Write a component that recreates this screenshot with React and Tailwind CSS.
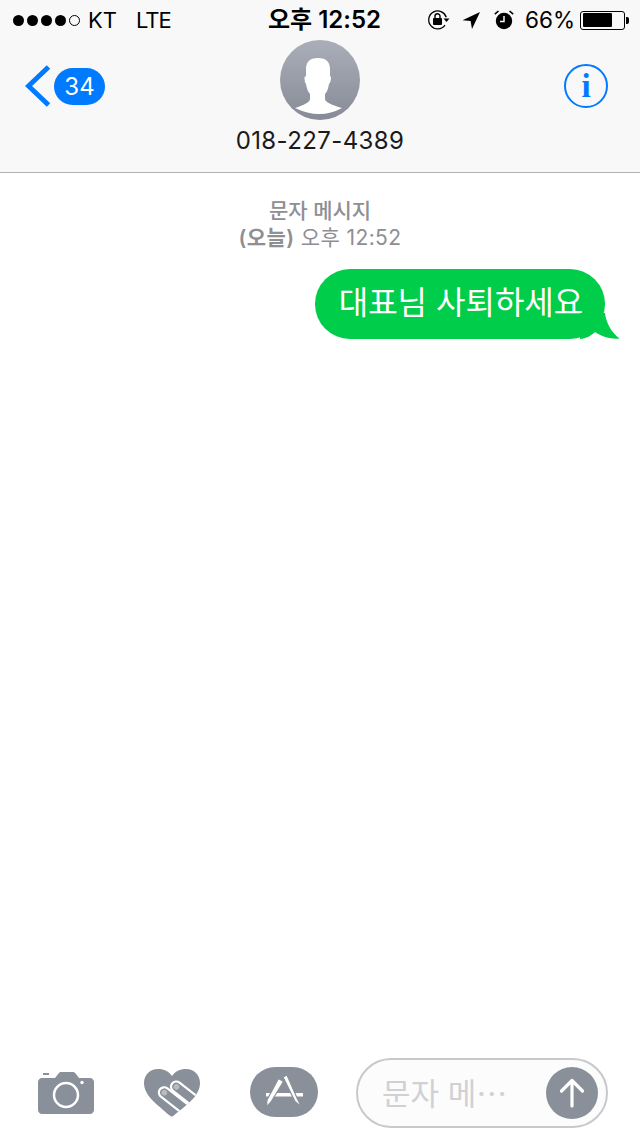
const FONT = "font-['Inter','Noto_Sans_CJK_KR',sans-serif]";

function Rotation() {
  return (
    <svg width="24" height="22" viewBox="0 0 24 22" className="block">
      <path d="M19.3 8.2A9 9 0 1 0 18 16.2" fill="none" stroke="#000" strokeWidth="1.3" />
      <path d="M16.5 9.5h6l-3 3.6z" fill="#000" />
      <rect x="6" y="9" width="9" height="7" rx="1" fill="#000" />
      <path d="M8 9V7.2a2.5 2.5 0 0 1 5 0V9" fill="none" stroke="#000" strokeWidth="1.4" />
    </svg>
  );
}

function Arrow() {
  return (
    <svg width="18" height="18" viewBox="0 0 18 18" className="block">
      <path d="M18 1 0.5 9.3 8.6 10 10 18z" fill="#000" />
    </svg>
  );
}

function Alarm() {
  return (
    <svg width="20" height="20" viewBox="0 0 20 20" className="block">
      <circle cx="10" cy="11" r="8.2" fill="#000" />
      <path d="M10 6v5.5H6" fill="none" stroke="#f8f8f8" strokeWidth="1.5" />
      <path d="M0.8 4.2 4.5 1M19.2 4.2 15.5 1" stroke="#000" strokeWidth="1.6" fill="none" />
    </svg>
  );
}

function Battery() {
  return (
    <div className="flex items-center">
      <div className="w-[45px] h-[19px] border border-black rounded-[3px] p-[1.5px] flex">
        <div className="w-[29px] h-full bg-black rounded-[1px]" />
      </div>
      <div className="w-[3px] h-[7px] bg-black rounded-r-[2px] ml-[1px]" />
    </div>
  );
}

function StatusBar() {
  return (
    <div className="h-10 relative flex items-center justify-between pl-[13px] pr-[11px] text-black">
      <div className="flex items-center">
        <div className="flex gap-[3px]">
          {[0, 1, 2, 3].map((i) => (
            <div key={i} className="w-[11px] h-[11px] rounded-full bg-black" />
          ))}
          <div className="w-[11px] h-[11px] rounded-full border border-black" />
        </div>
        <span className="ml-[8px] text-[22px] leading-none">KT</span>
        <span className="ml-[19px] text-[22px] leading-none tracking-[-1px]">LTE</span>
      </div>
      <div className="absolute left-[268px] top-0 h-10 flex items-center text-[24px] font-semibold leading-none whitespace-nowrap">
        오후 12:52
      </div>
      <div className="flex items-center">
        <Rotation />
        <div className="ml-[11px]"><Arrow /></div>
        <div className="ml-[14px]"><Alarm /></div>
        <span className="ml-[11px] text-[22.500px] leading-none">66%</span>
        <div className="ml-[5px]"><Battery /></div>
      </div>
    </div>
  );
}

function Avatar() {
  return (
    <svg width="80" height="80" viewBox="0 0 80 80" className="block">
      <defs>
        <linearGradient id="av" x1="0" y1="0" x2="0" y2="1">
          <stop offset="0" stopColor="#a9aeb9" />
          <stop offset="1" stopColor="#878b96" />
        </linearGradient>
      </defs>
      <circle cx="40" cy="40" r="40" fill="url(#av)" />
      <path
        d="M38 18C45 18 50 21 50 29V36L51 37C51 41 50 43 49 44C48 49 47 52 45 54V59C45 62 52 65 62 68Q40 80 15 68C24 65 30 62 30 59V54C28 52 27 49 26 44C25 43 24.500 41 24.500 37L26 36V29C26 21 31 18 38 18z"
        fill="#fff"
      />
    </svg>
  );
}

function Nav() {
  return (
    <div className="h-[132px] flex justify-between pl-[25px] pr-[32px] relative">
      <div className="flex items-start pt-[25px]">
        <svg width="26" height="42" viewBox="0 0 26 42" className="block">
          <path d="M23.500 2 3.500 21l20 19" fill="none" stroke="#007aff" strokeWidth="5" />
        </svg>
        <div className="ml-[3px] mt-[3px] w-[51px] h-[37px] rounded-full bg-[#007aff] text-white text-[24px] leading-[37px] text-center">
          34
        </div>
      </div>
      <div className="absolute left-0 right-0 top-0 flex flex-col items-center">
        <Avatar />
        <div className="mt-[5px] text-[24px] leading-[32px] tracking-[0.4px] text-[#1a1a1a]">018-227-4389</div>
      </div>
      <div className="pt-[24px]">
        <div className="w-[44px] h-[44px] rounded-full border-2 border-[#007aff] flex items-center justify-center text-[#007aff] font-['Liberation_Serif',serif] font-bold text-[33px] leading-none">
          i
        </div>
      </div>
    </div>
  );
}

function Bubble() {
  return (
    <div className="relative ml-[315px] w-[290px] h-[70px] rounded-[35px] bg-[#00cd49] flex items-center justify-center pb-[3px] pl-[2px] text-white text-[32px] leading-none whitespace-nowrap">
      대표님 사퇴하세요
      <svg width="40" height="26" viewBox="0 0 40 26" className="absolute right-[-15px] bottom-0 block">
        <path d="M0 26V0H25C26 10 32 20 39.500 25.500C32 26.500 22 24 15 19C12 22 6 26 0 26z" fill="#00cd49" />
      </svg>
    </div>
  );
}

function Heart() {
  return (
    <svg width="56" height="48" viewBox="0 0 56 48" className="block ml-[50px]">
      <defs>
        <clipPath id="heartclip">
          <path d="M28 47.500c-1 0-2-.6-3-1.500C14 36 0 27 0 14 0 6 6 0 14 0c6 0 11 2.500 14 7 3-4.500 8-7 14-7 8 0 14 6 14 14 0 13-14 22-25 31.500-1 .9-2 1.500-3 2z" />
        </clipPath>
      </defs>
      <g clipPath="url(#heartclip)">
        <rect width="56" height="48" fill="#8a9099" />
        <g transform="rotate(38 33 18)">
          <rect x="27" y="13" width="40" height="10.500" rx="5.250" fill="#8a9099" stroke="#fff" strokeWidth="2.200" />
          <circle cx="32.500" cy="18.250" r="2.800" fill="#b9bdc3" />
          <rect x="21" y="25" width="40" height="10.500" rx="5.250" fill="#8a9099" stroke="#fff" strokeWidth="2.200" />
          <circle cx="26.500" cy="30.250" r="2.800" fill="#b9bdc3" />
        </g>
        <path d="M52 27.500 36 46 56 48V27.500z" fill="#fff" />
      </g>
    </svg>
  );
}

function Toolbar() {
  return (
    <div className="h-[78px] flex items-center pl-[38px] pr-[32px] pb-[8px]">
      <svg width="56" height="44" viewBox="0 0 56 44" className="block mb-[3px]">
        <path
          d="M4 8h13l3.500-4.500c.6-.8 1.500-1.500 2.500-1.500h12c1 0 2 .7 2.600 1.500L41 8h11c2.200 0 4 1.800 4 4v28c0 2.200-1.800 4-4 4H4c-2.200 0-4-1.800-4-4V12c0-2.200 1.800-4 4-4z"
          fill="#8a9099"
        />
        <rect x="5" y="3" width="6" height="2" fill="#8a9099" />
        <circle cx="28" cy="25" r="12" fill="none" stroke="#fff" strokeWidth="2.500" />
        <circle cx="44" cy="12.500" r="1.700" fill="#fff" />
      </svg>
      <Heart />
      <div className="ml-[50px] w-[68px] h-[50px] rounded-[25px] bg-[#8a9099] flex items-center justify-center mb-[2px]">
        <svg width="37" height="33" viewBox="0 0 37 33" className="block mb-[2px]">
          <path d="M0 18h37v3.500H0z" fill="#fff" />
          <path d="M12.500 3.500 17.500 6.500 5 27 .5 32 1 25z" fill="#fff" stroke="#8a9099" strokeWidth="1.200" />
          <path d="M17 2 21 0 31 23 35.500 32 29 26.500z" fill="#fff" stroke="#8a9099" strokeWidth="1.200" />
        </svg>
      </div>
      <div className="ml-[38px] w-[252px] h-[70px] rounded-[35px] border-2 border-[#c8c8cd] bg-[#fcfcfc] flex items-center justify-between pl-[24px] pr-[8px]">
        <span className="text-[#d1d1d5] text-[31px] leading-none whitespace-nowrap">문자 메⋯</span>
        <div className="w-[52px] h-[52px] rounded-full bg-[#8a9099] flex items-center justify-center">
          <svg width="26" height="30" viewBox="0 0 26 30" className="block">
            <path d="M13 28V3M2.500 13 13 2.500 23.500 13" fill="none" stroke="#fff" strokeWidth="3.200" strokeLinecap="round" strokeLinejoin="round" />
          </svg>
        </div>
      </div>
    </div>
  );
}

export default function App() {
  return (
    <div className={`w-[640px] h-[1136px] bg-white flex flex-col overflow-hidden ${FONT}`}>
      <header className="h-[173px] bg-[#f8f8f8] border-b border-[#b2b2b2]">
        <StatusBar />
        <Nav />
      </header>
      <main className="flex-1">
        <div className="pt-[24px] text-center text-[#8e8e93] text-[21px] leading-[27px]">
          <div className="font-medium">문자 메시지</div>
          <div className="tracking-[0.4px]"><span className="font-semibold">(오늘)</span> 오후 12:52</div>
        </div>
        <div className="mt-[18px]"><Bubble /></div>
      </main>
      <Toolbar />
    </div>
  );
}
